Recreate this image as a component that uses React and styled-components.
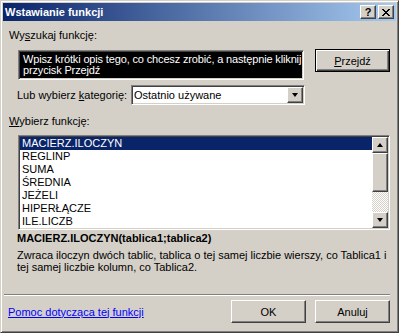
import React from "react";
import styled, { createGlobalStyle } from "styled-components";

const GlobalStyle = createGlobalStyle`
    html, body {
        margin: 0;
        padding: 0;
        background: #d4d0c8;
    }
    body {
        font-family: "Liberation Sans", Arial, sans-serif;
        font-size: 11px;
        color: #000;
    }
`;

const raised = `
    background: #d4d0c8;
    border: 1px solid;
    border-color: #fff #404040 #404040 #fff;
    box-shadow: inset -1px -1px #808080, inset 1px 1px #d4d0c8;
    box-sizing: border-box;
`;

const sunken = `
    border: 1px solid;
    border-color: #808080 #fff #fff #808080;
    box-shadow: inset 1px 1px #404040, inset -1px -1px #d4d0c8;
    box-sizing: border-box;
    padding: 1px;
`;

const StyledWindow = styled.div`
    width: 399px;
    height: 333px;
    box-sizing: border-box;
    background: #d4d0c8;
    border: 1px solid;
    border-color: #d4d0c8 #404040 #404040 #d4d0c8;
    box-shadow: inset 1px 1px #fff, inset -1px -1px #808080;
    padding: 2px;
    display: flex;
    flex-direction: column;
`;

const StyledTitleBar = styled.div`
    height: 18px;
    display: flex;
    align-items: center;
    padding: 0 2px;
    background: linear-gradient(to right, #0a246a, #a6caf0);
    color: #fff;
    font-weight: bold;
    font-size: 11px;
    h1 {
        font-size: 11px;
        margin: 0;
        flex: 1;
        line-height: 18px;
    }
`;

const StyledCaptionButton = styled.div`
    ${raised};
    width: 16px;
    height: 14px;
    display: flex;
    align-items: center;
    justify-content: center;
    color: #000;
    font-size: 11px;
    font-weight: bold;
    line-height: 1;
    margin-left: ${(props) => (props.$gap ? "2px" : "0")};
`;

const StyledContent = styled.div`
    flex: 1;
    display: flex;
    flex-direction: column;
    padding: 0 6px;
`;

const StyledLabel = styled.div`
    line-height: 13px;
    height: 13px;
    margin-top: ${(props) => props.$top || 0}px;
    margin-left: ${(props) => props.$indent || 0}px;
    white-space: nowrap;
    u {
        text-decoration: underline;
    }
`;

const StyledSearchRow = styled.div`
    display: flex;
    align-items: flex-start;
    margin-top: 8px;
    margin-left: 9px;
`;

const StyledSearchBox = styled.div`
    ${sunken};
    width: 286px;
    height: 30px;
    background: #000;
    color: #fff;
    padding: 3px 3px;
    line-height: 11px;
    white-space: nowrap;
    overflow: hidden;
    letter-spacing: -0.15px;
    div {
        padding-left: 1px;
    }
`;

const StyledButton = styled.button`
    ${raised};
    width: 75px;
    height: 23px;
    padding: 0;
    font-family: "Liberation Sans", Arial, sans-serif;
    font-size: 11px;
    color: #000;
    margin-left: ${(props) => props.$left || 0}px;
    margin-top: ${(props) => props.$top || 0}px;
    ${(props) =>
        props.$default &&
        `
        border: 1px solid #000;
        box-shadow: inset 1px 1px #fff, inset -1px -1px #404040, inset -2px -2px #808080;
    `}
`;

const StyledCategoryRow = styled.div`
    display: flex;
    align-items: center;
    margin-top: 5px;
    margin-left: 8px;
    height: 20px;
    span {
        width: 114px;
        white-space: nowrap;
    }
`;

const StyledSelect = styled.div`
    ${sunken};
    width: 174px;
    height: 20px;
    background: #fff;
    display: flex;
    align-items: center;
    span {
        flex: 1;
        padding-left: 1px;
    }
`;

const StyledArrowButton = styled.div`
    ${raised};
    width: 16px;
    height: ${(props) => props.$h || 16}px;
    display: flex;
    align-items: center;
    justify-content: center;
    flex-shrink: 0;
`;

const StyledTriangle = styled.div`
    width: 0;
    height: 0;
    border-left: 3.5px solid transparent;
    border-right: 3.5px solid transparent;
    ${(props) =>
        props.$up
            ? "border-bottom: 4px solid #000;"
            : "border-top: 4px solid #000;"}
`;

const StyledListBox = styled.div`
    ${sunken};
    margin-top: 7px;
    margin-left: 9px;
    width: 372px;
    height: 95px;
    background: #fff;
    display: grid;
    grid-template-columns: 1fr 16px;
`;

const StyledList = styled.div`
    display: flex;
    flex-direction: column;
`;

const StyledItem = styled.div`
    height: 13px;
    line-height: 13px;
    padding-left: 2px;
    background: ${(props) => (props.$selected ? "#0a246a" : "transparent")};
    color: ${(props) => (props.$selected ? "#fff" : "#000")};
    white-space: nowrap;
`;

const StyledScrollBar = styled.div`
    display: flex;
    flex-direction: column;
`;

const StyledThumb = styled.div`
    ${raised};
    height: 39px;
`;

const StyledTrack = styled.div`
    flex: 1;
    background-image: repeating-conic-gradient(#fff 0 25%, #d4d0c8 0 50%);
    background-size: 2px 2px;
`;

const StyledSignature = styled.div`
    font-weight: bold;
    line-height: 13px;
    margin-top: 2px;
    margin-left: 8px;
    white-space: nowrap;
`;

const StyledDescription = styled.div`
    line-height: 12px;
    margin-top: 4px;
    margin-left: 8px;
    white-space: nowrap;
`;

const StyledSeparator = styled.div`
    margin-top: 21px;
    margin-left: -5px;
    border-top: 1px solid #808080;
    border-bottom: 1px solid #fff;
`;

const StyledFooter = styled.div`
    display: flex;
    align-items: center;
    margin-top: 4px;
    a {
        flex: 1;
        margin-left: -1px;
        color: #0000ff;
        text-decoration: underline;
        white-space: nowrap;
    }
`;

const functions = [
    "MACIERZ.ILOCZYN",
    "REGLINP",
    "SUMA",
    "ŚREDNIA",
    "JEŻELI",
    "HIPERŁĄCZE",
    "ILE.LICZB",
];

function CloseGlyph() {
    return (
        <svg width="8" height="7" viewBox="0 0 8 7" shapeRendering="crispEdges">
            <path
                d="M0 0h2v1h-2zM6 0h2v1h-2zM1 1h2v1h-2zM5 1h2v1h-2zM2 2h4v1h-4zM3 3h2v1h-2zM2 4h4v1h-4zM1 5h2v1h-2zM5 5h2v1h-2zM0 6h2v1h-2zM6 6h2v1h-2z"
                fill="#000"
            />
        </svg>
    );
}

function App() {
    return (
        <>
            <GlobalStyle />
            <StyledWindow>
                <StyledTitleBar>
                    <h1>Wstawianie funkcji</h1>
                    <StyledCaptionButton>?</StyledCaptionButton>
                    <StyledCaptionButton $gap>
                        <CloseGlyph />
                    </StyledCaptionButton>
                </StyledTitleBar>
                <StyledContent>
                    <StyledLabel $top={8}>
                        Wy<u>s</u>zukaj funkcję:
                    </StyledLabel>
                    <StyledSearchRow>
                        <StyledSearchBox>
                            <div>Wpisz krótki opis tego, co chcesz zrobić, a następnie kliknij</div>
                            <div>przycisk Przejdź</div>
                        </StyledSearchBox>
                        <StyledButton $default $left={11} $top={-1}>
                            <u>P</u>rzejdź
                        </StyledButton>
                    </StyledSearchRow>
                    <StyledCategoryRow>
                        <span>
                            Lub wybierz <u>k</u>ategorię:
                        </span>
                        <StyledSelect>
                            <span>Ostatnio używane</span>
                            <StyledArrowButton>
                                <StyledTriangle />
                            </StyledArrowButton>
                        </StyledSelect>
                    </StyledCategoryRow>
                    <StyledLabel $top={10}>
                        <u>W</u>ybierz funkcję:
                    </StyledLabel>
                    <StyledListBox>
                        <StyledList>
                            {functions.map((name, i) => (
                                <StyledItem key={name} $selected={i === 0}>
                                    {name}
                                </StyledItem>
                            ))}
                        </StyledList>
                        <StyledScrollBar>
                            <StyledArrowButton>
                                <StyledTriangle $up />
                            </StyledArrowButton>
                            <StyledThumb />
                            <StyledTrack />
                            <StyledArrowButton>
                                <StyledTriangle />
                            </StyledArrowButton>
                        </StyledScrollBar>
                    </StyledListBox>
                    <StyledSignature>MACIERZ.ILOCZYN(tablica1;tablica2)</StyledSignature>
                    <StyledDescription>
                        <div>Zwraca iloczyn dwóch tablic, tablica o tej samej liczbie wierszy, co Tablica1 i</div>
                        <div>tej samej liczbie kolumn, co Tablica2.</div>
                    </StyledDescription>
                    <StyledSeparator />
                    <StyledFooter>
                        <a href="#">Pomoc dotycząca tej funkcji</a>
                        <StyledButton>OK</StyledButton>
                        <StyledButton $left={9}>Anuluj</StyledButton>
                    </StyledFooter>
                </StyledContent>
            </StyledWindow>
        </>
    );
}

export default App;
